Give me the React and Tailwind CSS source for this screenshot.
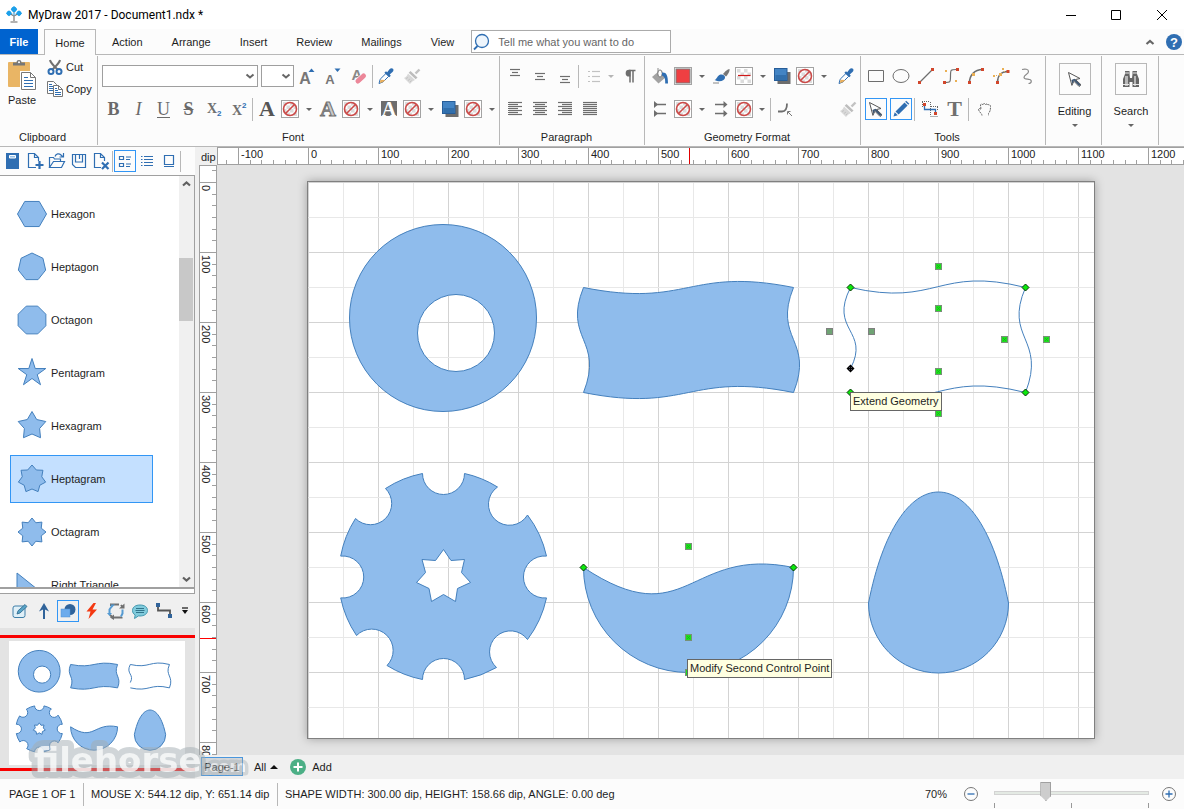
import React from "react";

const BLUE = "#2f6eb2";
const GRAY = "#6e6e6e";

function Icon({ size = 18, children, ...rest }) {
  return (
    <svg width={size} height={size} viewBox={`0 0 ${size} ${size}`} fill="none" aria-hidden="true" className="shrink-0 overflow-visible" {...rest}>
      {children}
    </svg>
  );
}

function Cell({ w = "w-[25px]", label, children, className = "" }) {
  return (
    <button type="button" aria-label={label} className={`flex h-[26px] shrink-0 items-center justify-center ${w} ${className}`}>
      {children}
    </button>
  );
}

function Sep() {
  return <span className="mr-[2px] ml-px h-[23px] w-px shrink-0 bg-[#b8b8b8]" />;
}

function Caret({ w = "w-[15px]", label = "More options", color = "#666" }) {
  return (
    <Cell w={w} label={label}>
      <svg width="6" height="3" viewBox="0 0 6 3"><path d="M0 0h6L3 3z" fill={color} /></svg>
    </Cell>
  );
}

function Checker({ children }) {
  return (
    <Icon size={18}>
      <rect x="1" y="1" width="16" height="16" fill="#fff" />
      <path d="M2 2h3.500v3.500H2zM9 2h3.500v3.500H9zM5.500 5.500H9V9H5.500zM12.500 5.500H16V9h-3.500zM2 9h3.500v3.500H2zM9 9h3.500v3.500H9zM5.500 12.500H9V16H5.500zM12.500 12.500H16V16h-3.500z" fill="#dcdcdc" />
      {children}
      <rect x=".5" y=".5" width="17" height="17" stroke="#a3a3a3" />
    </Icon>
  );
}

function Swatch({ kind = "none", label }) {
  return (
    <Cell w="w-[22px]" label={label}>
      <Checker>
        {kind === "none" && <><circle cx="9" cy="9" r="6.500" stroke="#cb4a48" strokeWidth="1.600" /><path d="M4.500 13.500l9-9" stroke="#cb4a48" strokeWidth="1.600" /></>}
        {kind === "fill" && <><rect x="2" y="2" width="14" height="14" fill="#ef3f42" stroke="#7d7d7d" /></>}
        {kind === "line" && <path d="M3 8.500h12.500" stroke="#d01818" strokeWidth="1.200" />}
      </Checker>
    </Cell>
  );
}

const Dropper = () => (
  <Icon size={18}>
    <path d="M2 16.500l1.200-4.300L9 6.400l2.800 2.800-5.700 5.700z" fill="#fff" stroke={BLUE} />
    <path d="M3.400 12.700l5 .3-2.600 2.300-3 .6z" fill="#eaaf5c" />
    <path d="M7.400 5.700l1.600-1.500 1.200 1.100 2.300-3.100c1.100-1.300 2.700-1.300 3.500-.4s.6 2.300-.5 3.300l-2.800 2.500 1.100 1.200-1.500 1.500z" fill={BLUE} />
  </Icon>
);

const FormatBrush = () => (
  <Icon size={18}>
    <path d="M16.500 2.500l-4 4" stroke="#c2c2c2" strokeWidth="2.400" />
    <path d="M7.500 4l7 6.500-1.800 1.800-7-6.600z" fill="#bdbdbd" />
    <path d="M5 6.500l7 6.500c-2 .7-3.500 2-5 4L1 11c2-1 3.300-2.500 4-4.500z" fill="#d8d8d8" />
    <path d="M3 11.500l2-1M5 13.500l2-1.500M7 15l1.500-1.500" stroke="#c4c4c4" />
  </Icon>
);

const Shadow = () => (
  <Icon size={18}>
    <rect x="4.500" y="5" width="13" height="12" fill="#6d6d6d" />
    <rect x="1.500" y="1.500" width="12.500" height="12" fill="#4384c4" stroke="#275d98" />
    <rect x="2.500" y="8" width="10.500" height="5" fill="#316fac" />
  </Icon>
);

const Pointer = () => (
  <Icon size={18}>
    <path d="M2.500 2.500l11.500 6-4.500 1 5.500 5.300-1.900 1.700-5.200-5.300-2 4.200z" fill="#fff" stroke="#555" />
    <path d="M8.500 8.800l6 6-1.300 1.200-5.300-5.500-1.500 3.500-1-4z" fill="#3b5573" />
  </Icon>
);

function Lines({ rows, color = GRAY }) {
  return (
    <Icon size={16}>
      {rows.map(([x, y, w], i) => <path key={i} d={`M${x} ${y + 0.5}h${w}`} stroke={color} strokeWidth="1.200" />)}
    </Icon>
  );
}

function Group({ label, className = "", children }) {
  return (
    <section aria-label={label} className={`flex shrink-0 flex-col border-r border-[#b8b8b8] ${className}`}>
      <div className="flex-1">{children}</div>
      <div className="pb-px text-center leading-[14px]">{label}</div>
    </section>
  );
}

const Row = ({ children, className = "" }) => <div className={`flex h-[26px] items-center ${className}`}>{children}</div>;

const SerifA = ({ mode }) => (
  <Icon size={20}>
    {mode === "invert" && <path d="M2 2h16v15H2z" fill="#6d6d6d" />}
    <text x="10" y="17" textAnchor="middle" fontFamily="Liberation Serif, serif" fontWeight="700" fontSize={mode === "invert" ? 20 : 22}
      fill={mode === "outline" ? "#c9c9c9" : mode === "invert" ? "#fff" : "#555"} stroke={mode === "outline" ? "#707070" : "none"} strokeWidth="1">A</text>
  </Icon>
);

function TitleBar() {
  return (
    <header className="flex h-[29px] items-center bg-white">
      <svg width="18" height="18" viewBox="0 0 18 18" className="ml-[5px]" aria-hidden="true">
        <path d="M9 5v10M9 10L4.500 7.500M9 10l4.500-2.500" stroke="#777" strokeWidth="1.200" fill="none" />
        <path d="M5.500 16h7" stroke="#888" strokeWidth="1.300" />
        <g fill="#1ca0ea"><path d="M9 0l3.300 3.300L9 6.600 5.700 3.300zM4 4.300l3 3-3 3-3-3zM14 4.300l3 3-3 3-3-3z" /><circle cx="9" cy="3.300" r="2.600" /><circle cx="4" cy="7.300" r="2.400" /><circle cx="14" cy="7.300" r="2.400" /></g>
        <circle cx="9" cy="8" r="1.500" fill="#86c6ea" />
      </svg>
      <h1 className="ml-[5px] flex-1 font-[Roboto,sans-serif] text-[12px] leading-[16px] text-black">MyDraw 2017 - Document1.ndx *</h1>
      <button type="button" aria-label="Minimize" className="grid h-full w-[45px] place-items-center"><Icon size={12}><path d="M1 6.500h10" stroke="#000" /></Icon></button>
      <button type="button" aria-label="Maximize" className="grid h-full w-[46px] place-items-center"><Icon size={12}><path d="M1.500 1.500h9v9h-9z" stroke="#000" /></Icon></button>
      <button type="button" aria-label="Close" className="grid h-full w-[45px] place-items-center"><Icon size={12}><path d="M1 1l10 10M11 1L1 11" stroke="#000" /></Icon></button>
    </header>
  );
}

function TabBar() {
  return (
    <nav className="flex h-[26px] border-b border-[#b8b8b8] bg-[#fcfcfc]">
      <button type="button" className="w-[38px] bg-[#0063cf] font-bold text-white">File</button>
      <button type="button" className="ml-[6px] -mb-px w-[52px] border border-b-0 border-[#b8b8b8] bg-[#fcfcfc]">Home</button>
      <div className="ml-[2px] flex gap-px">
        {["Action", "Arrange", "Insert", "Review", "Mailings", "View"].map((t) => (
          <button key={t} type="button" className="px-[14px]">{t}</button>
        ))}
      </div>
      <label className="mt-px ml-[3px] flex h-[23px] w-[200px] items-center border border-[#ababab] bg-white">
        <Icon size={20}><circle cx="10" cy="9" r="6.500" stroke={BLUE} strokeWidth="1.300" fill="#eef5fc" /><path d="M5.500 14L2 17.500" stroke={BLUE} strokeWidth="1.800" /></Icon>
        <input aria-label="Search commands" placeholder="Tell me what you want to do" className="ml-[6px] min-w-0 flex-1 bg-transparent outline-none placeholder:text-[#666]" />
      </label>
      <div className="flex-1" />
      <button type="button" aria-label="Collapse ribbon" className="px-[6px]"><Icon size={10}><path d="M1.500 7L5 4l3.500 3" stroke="#666" strokeWidth="2.200" /></Icon></button>
      <button type="button" aria-label="Help" className="pr-[2px] pl-[5px]">
        <Icon size={16}><circle cx="8" cy="8" r="8" fill={BLUE} /><text x="8" y="12.500" textAnchor="middle" fontSize="13" fontWeight="700" fill="#fff">?</text></Icon>
      </button>
    </nav>
  );
}

function Select({ label, w }) {
  return (
    <div className={`relative h-[22px] shrink-0 ${w}`}>
      <select aria-label={label} className="h-full w-full appearance-none border border-[#9f9f9f] bg-white"><option value=""></option></select>
      <svg className="pointer-events-none absolute top-[8px] right-[3px]" width="10" height="7" viewBox="0 0 10 7" fill="none"><path d="M1.500 1.500L5 4.500l3.500-3" stroke="#666" strokeWidth="2" /></svg>
    </div>
  );
}

function Ribbon() {
  const serif = "font-['Liberation_Serif',serif] text-[18px] leading-[20px] text-[#6a6a6a]";
  return (
    <div className="flex h-[92px] border-b border-[#b8b8b8] bg-[#fcfcfc] pt-px pb-px">
      <Group label="Clipboard" className="w-[98px] [&>div:last-child]:pr-[12px]">
        <div className="flex pt-[2px] pl-[7px]">
          <button type="button" className="mt-px flex flex-col items-center">
            <svg width="30" height="32" viewBox="0 0 30 32" fill="none" aria-hidden="true">
              <rect x="1" y="3" width="22" height="25" rx="1" fill="#e9b565" />
              <path d="M6 5.500V3.500h3.500C9.500 1.800 10.500 1 12 1s2.500.8 2.500 2.500H18v3H6z" fill="#777" /><circle cx="12" cy="3.300" r="1" fill="#fff" />
              <path d="M14.500 13.500h9l5 5v12h-14z" fill="#fff" stroke="#fff" strokeWidth="3" />
              <path d="M14.500 13.500h9l5 5v12h-14zM23.500 13.500v5h5" fill="#fff" stroke="#777" />
              <path d="M17 18.500h4M17 21.500h9M17 24.500h9M17 27.500h9" stroke={BLUE} />
            </svg>
            <span className="mt-[2px] leading-[14px]">Paste</span>
          </button>
          <div className="ml-[10px] flex flex-col items-start">
            <button type="button" className="flex h-[18px] items-center gap-[3px]">
              <Icon size={16}><path d="M3 1c.5 3 4 6 8 10M13 1c-.5 3-4 6-8 10" stroke="#707070" strokeWidth="2" /><circle cx="4" cy="12.500" r="2.500" stroke={BLUE} strokeWidth="2" /><circle cx="12" cy="12.500" r="2.500" stroke={BLUE} strokeWidth="2" /></Icon>Cut
            </button>
            <button type="button" className="mt-[4px] flex h-[18px] items-center gap-[3px]">
              <Icon size={16}><path d="M.5.500h6l3 3v9h-9z" fill="#fff" stroke="#777" /><path d="M2 3.500h3M2 5.500h5M2 7.500h5M2 9.500h5" stroke={BLUE} /><path d="M6.500 4.500h5l4 4v7h-9z" fill="#fff" stroke="#777" /><path d="M11.500 4.500v4h4" stroke="#777" /><path d="M8 7.500h2M8 9.500h3M8 11.500h6M8 13.500h6" stroke={BLUE} /></Icon>Copy
            </button>
          </div>
        </div>
      </Group>
      <Group label="Font" className="w-[402px] [&>div:last-child]:pr-[11px]">
        <Row className="mt-[7px] pl-[4px]">
          <Select label="Font family" w="w-[156px] mr-[3px]" />
          <Select label="Font size" w="w-[33px]" />
          <Cell w="w-[26px]" label="Grow font"><Icon size={18}><text x="7" y="17" textAnchor="middle" fontSize="16" fontWeight="700" fill="#777">A</text><path d="M10.500 5L13.500 1.500l3 3.500z" fill={BLUE} /></Icon></Cell>
          <Cell w="w-[26px]" label="Shrink font"><Icon size={18}><text x="6" y="17" textAnchor="middle" fontSize="13" fontWeight="700" fill="#777">A</text><path d="M10.500 1.500h6l-3 3.500z" fill={BLUE} /></Icon></Cell>
          <Cell w="w-[26px]" label="Clear formatting"><Icon size={18}><text x="7" y="13" textAnchor="middle" fontSize="15" fontWeight="700" fill="#888">A</text><path d="M8 14l6-5.500" stroke="#fff" strokeWidth="6" /><path d="M8 14l5.500-5" stroke="#ec8799" strokeWidth="5" strokeLinecap="round" /></Icon></Cell>
          <span className="h-[23px] w-px bg-[#b8b8b8]" />
          <Cell w="w-[26px]" label="Pick font style"><Dropper /></Cell>
          <Cell label="Format painter"><FormatBrush /></Cell>
        </Row>
        <Row className="mt-[7px] pl-[3px]">
          <Cell label="Bold"><b className={serif}>B</b></Cell>
          <Cell label="Italic"><i className={serif}>I</i></Cell>
          <Cell label="Underline"><u className={`${serif} decoration-1 underline-offset-2`}>U</u></Cell>
          <Cell label="Strikethrough"><s className={`${serif} font-bold decoration-1`}>S</s></Cell>
          <Cell label="Subscript"><Icon size={18}><text x="7" y="13" textAnchor="middle" fontFamily="Liberation Serif" fontWeight="700" fontSize="14" fill="#707070">X</text><text x="12" y="16" fontSize="8" fontWeight="700" fill={BLUE}>2</text></Icon></Cell>
          <Cell label="Superscript"><Icon size={18}><text x="7" y="15" textAnchor="middle" fontFamily="Liberation Serif" fontWeight="700" fontSize="14" fill="#707070">X</text><text x="12" y="8" fontSize="8" fontWeight="700" fill={BLUE}>2</text></Icon></Cell>
          <Sep />
          <Cell w="w-[24px]" label="Text fill"><SerifA /></Cell><Swatch label="Text fill color" /><Caret />
          <Cell w="w-[24px]" label="Text outline"><SerifA mode="outline" /></Cell><Swatch label="Text outline color" /><Caret />
          <Cell w="w-[24px]" label="Text highlight"><SerifA mode="invert" /></Cell><Swatch label="Highlight color" /><Caret />
          <Cell w="w-[24px]" label="Text shadow"><Shadow /></Cell><Swatch label="Shadow color" /><Caret />
        </Row>
      </Group>
      <Group label="Paragraph" className="w-[145px] [&>div:last-child]:pr-[11px]">
        <Row className="mt-[7px] pl-[2px]">
          <Cell label="Align top"><Lines rows={[[3, 1, 10], [5, 4, 6], [3, 7, 10]]} /></Cell>
          <Cell label="Align middle"><Lines rows={[[3, 5, 10], [5, 8, 6], [3, 11, 10]]} /></Cell>
          <Cell label="Align bottom"><Lines rows={[[3, 8, 10], [5, 11, 6], [3, 14, 10]]} /></Cell>
          <Sep />
          <Cell label="Bullets"><Lines color="#c2c2c2" rows={[[2, 3, 2], [6, 3, 8], [2, 8, 2], [6, 8, 8], [2, 13, 2], [6, 13, 8]]} /></Cell>
          <Caret w="w-[10px]" color="#b5b5b5" />
          <Cell w="w-[28px]" label="Show paragraph marks"><Icon size={16}><path d="M8 14.500V2.500h5.500M11 2.500v12" stroke={GRAY} strokeWidth="1.500" /><path d="M8.500 1.800v6.700H7a3.300 3.300 0 010-6.700z" fill={GRAY} /></Icon></Cell>
        </Row>
        <Row className="mt-[7px] pl-[2px]">
          {[
            ["Align left", [14, 10, 14, 10, 14, 10, 14], 0],
            ["Center", [14, 10, 14, 10, 14, 10, 14], 1],
            ["Align right", [14, 10, 14, 10, 14, 10, 14], 2],
            ["Justify", [14, 14, 14, 14, 14, 14, 14], 0],
          ].map(([name, ws, a]) => (
            <Cell key={name} label={name}><Lines rows={ws.map((w, i) => [1 + ((14 - w) * a) / 2, 1 + i * 2, w])} /></Cell>
          ))}
        </Row>
      </Group>
      <Group label="Geometry Format" className="w-[216px] [&>div:last-child]:pr-[11px]">
        <Row className="mt-[7px] pl-[3px]">
          <Cell w="w-[24px]" label="Fill"><Icon size={18}><path d="M8 4l7 6-7.500 6.500L1 10z" fill="#a2a2a2" /><path d="M7 1v7" stroke="#8a8a8a" /><ellipse cx="9" cy="6.500" rx="2.200" ry="3.600" fill="#fff" stroke="#777" /><path d="M11 5.500c4-.5 6 2 6 11h-2.800c.3-5-.8-7-3.200-8z" fill={BLUE} /></Icon></Cell>
          <Swatch kind="fill" label="Fill color" /><Caret />
          <Cell w="w-[24px]" label="Stroke"><Icon size={18}><path d="M17.500 2c.5 2-1.500 5.500-3.500 7.500l-3-2.500c1.500-2 4.500-4.800 6.500-5z" fill="#777" /><path d="M2.500 13c2.500-.5 2.500-4.500 6-5.500 2.500-.5 5 1 4.500 3.500-.7 3-5.500 4.500-10.500 2z" fill={BLUE} /><path d="M1 16h6" stroke="#888" /></Icon></Cell>
          <Swatch kind="line" label="Stroke color" /><Caret />
          <Cell w="w-[24px]" label="Shape shadow"><Shadow /></Cell><Swatch label="Shape shadow color" /><Caret />
          <Cell w="w-[29px]" label="Pick geometry style"><Dropper /></Cell>
        </Row>
        <Row className="mt-[7px] pl-[3px]">
          <Cell w="w-[24px]" label="Begin arrowhead"><Icon size={18}><path d="M4 4.500h11M4 13.500h11" stroke={GRAY} strokeWidth="1.400" /><path d="M3 1v7l4-3.500zM3 10v7l4-3.500z" fill={GRAY} /></Icon></Cell>
          <Swatch label="Begin arrowhead style" /><Caret />
          <Cell w="w-[24px]" label="End arrowhead"><Icon size={18}><path d="M3 4.500h10M3 13.500h10" stroke={GRAY} strokeWidth="1.400" /><path d="M11.500 1v7l4-3.500zM11.500 10v7l4-3.500z" fill={GRAY} /></Icon></Cell>
          <Swatch label="End arrowhead style" /><Caret w="w-[14px]" />
          <Sep />
          <Cell w="w-[24px]" label="Corner rounding"><Icon size={18}><path d="M2 11.500h4c4 0 5-3 5-8" stroke={GRAY} strokeWidth="1.800" /><path d="M11.500 11.500h3M11.500 11.500v3M12 12l4 4" stroke="#777" /></Icon></Cell>
          <span className="flex-1" />
          <Cell label="Geometry format painter"><FormatBrush /></Cell>
        </Row>
      </Group>
      <Group label="Tools" className="w-[185px] [&>div:last-child]:pr-[12px]">
        <Row className="mt-[7px] pl-[2px]">
          <Cell label="Rectangle"><Icon size={18}><path d="M1.500 3.500h15v11h-15z" stroke={GRAY} /></Icon></Cell>
          <Cell label="Ellipse"><Icon size={18}><ellipse cx="9" cy="9" rx="8" ry="6.500" stroke={GRAY} /></Icon></Cell>
          <Cell label="Line"><Icon size={18}><path d="M2.500 15.500l13-13" stroke={GRAY} strokeWidth="1.200" /><path d="M1 14h3v3H1zM14 1h3v3h-3z" fill="#d1462b" /></Icon></Cell>
          <Cell label="Bezier curve"><Icon size={18}><path d="M2.500 15.500c6 0 6 0 6-6.500s0-6.500 6-6.500" stroke={GRAY} strokeWidth="1.200" /><path d="M1 14h3v3H1zM14 1h3v3h-3z" fill="#d1462b" /><path d="M3 3h2v2H3zM13 13h2v2h-2z" fill="#eab055" /></Icon></Cell>
          <Cell label="Arc"><Icon size={18}><path d="M2.500 15.500c0-7 5-13 13-13" stroke={GRAY} strokeWidth="1.500" /><path d="M1 14h3v3H1zM14 1h3v3h-3z" fill="#d1462b" /><path d="M5 6h3v3H5z" fill="#eab055" /></Icon></Cell>
          <Cell label="Spline"><Icon size={18}><path d="M5.500 15.500c0-7 4-11 10-11" stroke={GRAY} strokeWidth="1.500" /><path d="M4 14h3v3H4zM14.500 3h3v3h-3z" fill="#d1462b" /><path d="M1 8h2v2H1zM10 1h2v2h-2zM7 6h3v3H7zM4 8h1v1H4zM12 4h1v1h-1z" fill="#eab055" /></Icon></Cell>
          <Cell w="w-[28px]" label="Freehand"><Icon size={18}><path d="M4 2.500c3-.8 6.500-.5 6.500 2 0 3-4.500 3-4.500 6 0 1.800 3 1.500 5.500 2s2.500 4-1 4" stroke="#8a8a8a" strokeWidth="1.200" /></Icon></Cell>
        </Row>
        <Row className="mt-[7px] pl-[4px]">
          <Cell w="w-[22px]" label="Pointer" className="!h-[22px] border border-[#3296f5]"><Pointer /></Cell>
          <Cell w="w-[22px] ml-[3px]" label="Pencil" className="!h-[22px] border border-[#3296f5]"><Icon size={18}><path d="M1.500 16.500l1.200-4.300 3.100 3.100zM3.500 11.400L12.500 2.400l3.100 3.100-9 9z" fill={BLUE} /><path d="M13.200 1.700l1-1 3.100 3.100-1 1z" fill={BLUE} /></Icon></Cell>
          <span className="w-px" /><Sep />
          <Cell label="Connector"><Icon size={18}><path d="M1 1.500h8M1.500 2v5M9.500 2v14M9.500 16.500h7M16.500 7v4M10 6.500h7" stroke="#666" strokeDasharray="1 1" /><path d="M3.500 5v4.500h11V14" stroke={BLUE} strokeWidth="1.300" /><path d="M2 3h3v3H2zM13 12h3v3h-3z" fill="#d1462b" /></Icon></Cell>
          <Cell label="Text"><b className="font-['Liberation_Serif',serif] text-[22px] leading-[22px] text-[#707070]">T</b></Cell>
          <Sep />
          <Cell w="w-[28px]" label="Pan"><Icon size={18}><path d="M6 15.500c0-2-3-3.500-3.500-6 0-1.500 2-1 2.500 0L4.500 5C5 3.500 6.500 4 7 5c0-2 2-2 2.500 0 .5-1.500 2-1.500 2.500 0 1-1 2.500 0 2.500 1.500 0 4-.5 5-2 7v2" stroke="#666" strokeDasharray="2 .7" /></Icon></Cell>
        </Row>
      </Group>
      {[
        ["Editing", "w-[56px]", <Pointer key="p" />],
        ["Search", "w-[57px]", <Icon size={20} key="s"><path d="M4 2h4.500v3L9 9h2l.5-4V2H16v3l2 5v8h-6.500v-5h-3v5H2v-8l2-5z" fill="#666" /><path d="M4 7h3v10H4zM13 7h2v10h-2z" fill="#b8b8b8" /><path d="M4 4h4M12 4h4M2 15.500h6M12 15.500h6" stroke="#e8e8e8" /></Icon>],
      ].map(([t, w, icon]) => (
        <button key={t} type="button" className={`flex shrink-0 flex-col items-center border-r border-[#b8b8b8] pt-[7px] pl-[2px] ${w}`}>
          <span className="grid h-[32px] w-[32px] place-items-center border border-[#b8b8b8]">{icon}</span>
          <span className="mt-[9px] leading-[14px]">{t}</span>
          <svg className="mt-[6px]" width="6" height="3" viewBox="0 0 6 3"><path d="M0 0h6L3 3z" fill="#666" /></svg>
        </button>
      ))}
    </div>
  );
}

function star(n, outer, inner, rot = -90) {
  const pts = [];
  const count = inner ? n * 2 : n;
  for (let i = 0; i < count; i++) {
    const r = inner && i % 2 ? inner : outer;
    const a = ((rot + (360 / count) * i) * Math.PI) / 180;
    pts.push(`${(15 + r * Math.cos(a)).toFixed(2)},${(15 + r * Math.sin(a)).toFixed(2)}`);
  }
  return pts.join(" ");
}

const LIBRARY = [
  ["Hexagon", star(6, 14.5, 0, 0)],
  ["Heptagon", star(7, 14, 0)],
  ["Octagon", star(8, 15, 0, 22.5)],
  ["Pentagram", star(5, 14.5, 5.5)],
  ["Hexagram", star(5, 14.5, 8)],
  ["Heptagram", star(7, 14, 10)],
  ["Octagram", star(8, 14, 10)],
  ["Right Triangle", "0,3 0,27 30,27"],
];

function LibraryPanel() {
  const b = { stroke: BLUE, strokeWidth: 1.2 };
  return (
    <>
      <div className="flex h-[29px] items-center border-b border-[#a0a0a0] bg-[#fcfcfc]">
        <Cell w="w-[24px]" label="Library"><Icon size={18}><rect x="3" y="1" width="13" height="16" fill={BLUE} /><path d="M6.500 3.500h6v2.500h-6z" fill="#9cc3e8" stroke="#fff" /></Icon></Cell>
        <Cell w="w-[22px]" label="New library"><Icon size={18}><path d="M10 15.500H2.500v-14h6l4 4V9M8.500 1.500v4h4" {...b} /><path d="M13.500 9v8M9.500 13h8" stroke={BLUE} strokeWidth="2.200" /></Icon></Cell>
        <Cell w="w-[22px]" label="Open library"><Icon size={18}><path d="M1.500 15.500V5.500h4l1 1.500h6v2.500M1.500 15.500l4-6h11l-3 6zM7 4.500c1-3 4-3.500 6-1.500l2 2M15.500 1v4h-4" {...b} /></Icon></Cell>
        <Cell w="w-[22px]" label="Save library"><Icon size={18}><path d="M2.500 2.500h13v13H5.500l-3-3zM5.500 2.500v7.500h7V2.500M9.500 3v4" {...b} /></Icon></Cell>
        <Cell w="w-[22px]" label="Close library"><Icon size={18}><path d="M9 15.500H2.500v-14h6l4 4V9M8.500 1.500v4h4" {...b} /><path d="M10 10.500l6.500 6.500M16.500 10.500L10 17" stroke={BLUE} strokeWidth="2.200" /></Icon></Cell>
        <span className="h-[21px] w-px bg-[#b8b8b8]" />
        <Cell w="w-[22px] ml-px" label="Icons and names" className="!h-[22px] border border-[#3296f5]"><Icon size={16}><path d="M2.500 3.500h4v3h-4zM2.500 10.500h4v3h-4zM9 4h5M9 6.500h4M9 11h5M9 13.500h4" {...b} /></Icon></Cell>
        <Cell w="w-[22px]" label="Names only"><Icon size={16}><path d="M5 3.500h9M5 6.500h9M5 9.500h9M5 12.500h9M2 3.500h1.500M2 6.500h1.500M2 9.500h1.500M2 12.500h1.500" {...b} /></Icon></Cell>
        <Cell w="w-[22px]" label="Icons only"><Icon size={16}><path d="M3.500 2.500h9v9h-9zM3 13.500h10" {...b} /></Icon></Cell>
        <span className="h-[21px] w-px bg-[#b8b8b8]" />
      </div>
      <div className="flex min-h-0 flex-1 border-r border-[#a0a0a0] bg-white">
        <ul className="min-w-0 flex-1 overflow-hidden pt-[14px] pl-[10px]">
          {LIBRARY.map(([name, pts]) => (
            <li key={name} className="mb-[5px]">
              <button type="button" className={`flex h-[48px] w-[143px] items-center gap-[4px] border pl-[6px] ${name === "Heptagram" ? "border-[#3296f5] bg-[#c4e0ff]" : "border-transparent"}`}>
                <Icon size={30}><polygon points={pts} fill="#8fbcec" stroke="#4480bd" /></Icon>
                <span>{name}</span>
              </button>
            </li>
          ))}
        </ul>
        <div className="flex w-[15px] flex-col items-center bg-[#f0f0f0]">
          <Icon size={16}><path d="M4 9.500L7.500 6.500l3.500 3" stroke="#606060" strokeWidth="2.200" /></Icon>
          <div className="mt-[66px] mr-px h-[63px] w-[14px] bg-[#c8c8c8]" />
          <div className="flex-1" />
          <Icon size={16}><path d="M4 6.500L7.500 9.500l3.500-3" stroke="#606060" strokeWidth="2.200" /></Icon>
        </div>
      </div>
      <div className="h-[7px] border-y border-t-2 border-r border-[#a0a0a0] bg-white" />
    </>
  );
}

function CategoryBar() {
  return (
    <div className="flex h-[34px] items-center bg-[#f0f0f0] pl-[7px]">
      <Cell label="Edit"><Icon size={16}><rect x="1" y="3" width="12" height="11.500" rx="2" fill="#e0f0f8" stroke="#3f7fa8" /><path d="M5 11l1-3.200 7-6.300 2 2-7 6.500z" fill="#59a5c8" stroke="#2b648a" strokeWidth=".8" /></Icon></Cell>
      <Cell w="w-[24px]" label="Arrow shapes"><Icon size={16}><path d="M8 16V5" stroke="#30639a" strokeWidth="2" /><path d="M8 0l5 8.500L8 6 3 8.500z" fill="#30639a" /></Icon></Cell>
      <Cell w="w-[22px] ml-px" label="Basic shapes" className="!h-[22px] border border-[#3296f5]"><Icon size={18}><circle cx="11" cy="7.500" r="5.500" fill="#30639a" /><rect x="2" y="7" width="9" height="8" fill="#6cabec" stroke="#4e90d4" strokeWidth=".5" /></Icon></Cell>
      <Cell label="Energy"><Icon size={18}><path d="M10.500 1L3.500 9.500h4L5.500 17l8.500-9.500H9.500L13 1z" fill="#f43912" /></Icon></Cell>
      <Cell w="w-[24px]" label="Cycle"><Icon size={18}><path d="M4 4V2.500h8M14 3l2 2.500M14.500 15v.5H6L3 13" stroke="#707070" strokeWidth="2" /><path d="M2.500 11V7.500L5 4M15.500 7.500v4L14 14.500" stroke="#569bd2" strokeWidth="2" /><path d="M12 6.500h5.500V1.500zM7 12.500v5.500l-4-2.500z" fill="#707070" /><path d="M0 11h5l-2.500 3zM3.500 2.500h4.500l-3 3z" fill="#569bd2" /></Icon></Cell>
      <Cell w="w-[24px]" label="Callouts"><Icon size={18}><path d="M9 3c4.500 0 7.500 2 7.500 5.500S13 14 9 14l-1.500-.1-4 2.600.7-3.500C2.500 12 1.500 10.500 1.500 8.500 1.500 5 4.500 3 9 3z" fill="#80cbdc" stroke="#4599b0" /><path d="M5 6.500h8M4.500 8.500h9M5 10.500h8" stroke="#31758c" /></Icon></Cell>
      <Cell w="w-[24px]" label="Connectors"><Icon size={18}><path d="M3 3v5.500h12V14" stroke="#555" strokeWidth="1.800" /><path d="M1 1h4v4H1zM13 12h4v4h-4z" fill="#30639a" /></Icon></Cell>
      <Cell w="w-[17px]" label="More categories"><Icon size={8}><path d="M1 1h6" stroke="#111" strokeWidth="1.200" /><path d="M1 3h6L4 7z" fill="#111" /></Icon></Cell>
    </div>
  );
}

function Drawing() {
  return (
    <g fill="#8fbcec" stroke="#4480bd" strokeWidth="1" className="[&_*]:[vector-effect:non-scaling-stroke]">
      <path fillRule="evenodd" d="M349.500 318a93.500 93.500 0 11187 0 93.500 93.500 0 11-187 0zM417.500 333a38.500 38.500 0 1077 0 38.500 38.500 0 10-77 0z" />
      <path transform="translate(-.5 -.5)" d="M584 288C689 309 689 267 794 288C773 340 815 340 794 393C689 372 689 414 584 393C605 340 563 340 584 288z" />
      <path transform="translate(-.5 -.5)" fill="none" d="M851 369C871 331 829 331 851 288C938 308 938 266 1026 288C1004 339 1047 339 1026 393C938 371 938 413 851 393" />
      <path fillRule="evenodd" d="M422.500 473.500A21 21 0 00464.500 473.500A105 105 0 01497.500 487A21 21 0 10527.500 515A105 105 0 01546.500 556.100A21 21 0 10546.500 597.900A105 105 0 01527.500 639.500A21 21 0 10496.500 667.500A105 105 0 01464.500 679.500A21 21 0 00422.500 679.500A105 105 0 01387 665.500A21 21 0 10356.500 635.500A105 105 0 01340.700 597.900A21 21 0 10340.700 556.100A105 105 0 01355.500 518.500A21 21 0 10385.500 488.500A105 105 0 01422.500 473.500zM443.500 549.500L451 560.500 464.500 559.500 461.500 572.500 470.500 582.500 457.500 588.500 455.500 601.500 443.500 594.500 431.500 601.500 429 588.500 416.500 582.500 425.500 572.500 422 559.500 435.500 560.500z" />
      <path transform="translate(-.5 -.5)" d="M584 568C688 637 688 546 794 568A105 105 0 01584 568z" />
      <path d="M868.500 603C883 530 910 492 938.500 492C967 492 994 530 1008.500 603A70 70 0 01868.500 603z" />
    </g>
  );
}

function Navigator() {
  return (
    <div className="h-[151px] overflow-hidden bg-[#e3e3e3]">
      <div className="mt-[7px] flex h-[136px] justify-start border-y-[3px] border-[#f90000] py-[3px] pl-[9px]">
        <svg width="176" height="124" viewBox="308 182 787 557" preserveAspectRatio="none" className="bg-white" role="img" aria-label="Document overview"><Drawing /></svg>
      </div>
    </div>
  );
}

const range = (a, b) => Array.from({ length: b - a + 1 }, (_, i) => a + i);

function TopRuler() {
  return (
    <svg className="h-[18px] min-w-0 flex-1 border-t border-b border-l border-[#a0a0a0] bg-white" aria-label="Horizontal ruler">
      <g transform="translate(-218 -148)" fontSize="11" fill="#222">
        {range(-7, 82).map((i) => {
          const x = Math.round(308 + (i * 70) / 6) + 0.5;
          return <path key={i} d={`M${x} ${i % 6 ? 160 : 148}V164`} stroke="#a0a0a0" />;
        })}
        {range(-1, 12).map((i) => <text key={i} x={308 + i * 70 + 3} y="158">{i * 100}</text>)}
        <path d="M689.500 148V164" stroke="#e00000" />
      </g>
    </svg>
  );
}

function SideRuler() {
  return (
    <svg className="h-full w-[18px] shrink-0 border-x border-t border-[#a0a0a0] bg-white" aria-label="Vertical ruler">
      <g transform="translate(-200 -166)" fontSize="11" fill="#222">
        {range(-1, 52).map((i) => {
          const y = Math.round(182 + (i * 70) / 6) + 0.5;
          return <path key={i} d={`M${i % 6 ? 212 : 200} ${y}H217`} stroke="#a0a0a0" />;
        })}
        {range(0, 8).map((i) => <text key={i} transform={`translate(202 ${185 + i * 70}) rotate(90)`}>{i * 100}</text>)}
        <path d="M200 638.500H217" stroke="#f00" />
      </g>
    </svg>
  );
}

const SQUARES = [[938, 266], [938, 308], [938, 371], [938, 413], [1004, 339], [1046, 339], [688, 546], [688, 637], [688, 672]];
const DIMMED = [[829, 331], [871, 331]];
const DIAMONDS = [[851, 288], [1026, 288], [1026, 393], [851, 393], [584, 568], [794, 568]];

function Canvas() {
  return (
    <div className="relative min-w-0 flex-1 overflow-hidden bg-[#e3e3e3]">
      <svg className="block h-full w-full" role="img" aria-label="Drawing page">
        <g transform="translate(-217 -165)">
          <rect x="307.500" y="181.500" width="787" height="557" fill="#fff" stroke="#808080" className="drop-shadow-[0_0_5px_rgba(0,0,0,0.3)]" />
          {range(0, 22).map((i) => <path key={`v${i}`} d={`M${308.5 + i * 35} 182V738`} stroke={i % 2 ? "#e8e8e8" : "#d3d3d3"} />)}
          {range(0, 15).map((i) => <path key={`h${i}`} d={`M308 ${182.5 + i * 35}H1094`} stroke={i % 2 ? "#e8e8e8" : "#d3d3d3"} />)}
          <Drawing />
          {SQUARES.map(([x, y]) => <g key={`${x}-${y}`}><rect x={x - 2.5} y={y - 2.5} width="6" height="6" fill="#1fe01f" stroke="#779077" /><path d={`M${x - 1} ${y - 1}l3 3m0-3l-3 3`} stroke="#12b012" strokeWidth=".7" /></g>)}
          {DIMMED.map(([x, y]) => <rect key={x} x={x - 2.5} y={y - 2.5} width="6" height="6" fill="#6fa374" stroke="#7f7f7f" />)}
          {DIAMONDS.map(([x, y]) => <path key={`${x}-${y}`} d={`M${x - 0.5} ${y - 4}l3.500 3.500-3.500 3.500-3.500-3.500z`} fill="#0ce80c" stroke="#063306" />)}
          <path d="M850.500 364.500l4 4-4 4-4-4z" fill="#000" /><path d="M848.500 366.500l4 4m0-4l-4 4" stroke="#667" strokeWidth=".8" /><path d="M847 368.500h7M850.500 365v7" stroke="#000" />
        </g>
      </svg>
      <div role="tooltip" className="absolute top-[227px] left-[633px] border border-[#666] bg-[#ffffe1] px-[2px] pb-px leading-[16px] whitespace-nowrap">Extend Geometry</div>
      <div role="tooltip" className="absolute top-[494px] left-[470px] border border-[#666] bg-[#ffffe1] px-[2px] pb-px leading-[16px] whitespace-nowrap">Modify Second Control Point</div>
    </div>
  );
}

function PageTabs() {
  return (
    <div className="flex h-[24px] items-center bg-[#f0f0f0] pb-px pl-[2px]">
      <button type="button" className="h-[19px] w-[42px] border border-[#4a96dc] bg-[#d3d6d9]">Page-1</button>
      <button type="button" className="ml-[11px] flex items-center gap-[4px]">All<svg width="8" height="4" viewBox="0 0 8 4"><path d="M0 4h8L4 0z" fill="#111" /></svg></button>
      <button type="button" className="ml-[12px] flex items-center gap-[6px]">
        <Icon size={16}><circle cx="8" cy="8" r="8" fill="#4caf86" /><path d="M8 3.500v9M3.500 8h9" stroke="#fff" strokeWidth="2" /></Icon>Add
      </button>
    </div>
  );
}

function StatusBar() {
  return (
    <footer className="flex h-[30px] items-center bg-[#fcfcfc] pl-[9px]">
      <span className="w-[74px] whitespace-nowrap">PAGE 1 OF 1</span>
      <span className="h-[23px] w-px bg-[#b8b8b8]" />
      <span className="w-[193px] pl-[7px] whitespace-nowrap">MOUSE X: 544.12 dip, Y: 651.14 dip</span>
      <span className="h-[23px] w-px bg-[#b8b8b8]" />
      <span className="pl-[7px] whitespace-nowrap">SHAPE WIDTH: 300.00 dip, HEIGHT: 158.66 dip, ANGLE: 0.00 deg</span>
      <span className="flex-1" />
      <span>70%</span>
      <button type="button" aria-label="Zoom out" className="ml-[17px]"><Icon size={14}><circle cx="7" cy="7" r="6.500" stroke="#777" /><path d="M3.500 7h7" stroke={BLUE} strokeWidth="1.300" /></Icon></button>
      <div className="ml-[16px] w-[155px] pt-[3px]">
        <input type="range" aria-label="Zoom" min="0" max="100" defaultValue="32" className="block h-[20px] w-full appearance-none bg-transparent [&::-webkit-slider-runnable-track]:h-[4px] [&::-webkit-slider-runnable-track]:border [&::-webkit-slider-runnable-track]:border-[#d3d3d3] [&::-webkit-slider-runnable-track]:bg-[#e4eae4] [&::-webkit-slider-thumb]:mt-[-10px] [&::-webkit-slider-thumb]:h-[19px] [&::-webkit-slider-thumb]:w-[11px] [&::-webkit-slider-thumb]:appearance-none [&::-webkit-slider-thumb]:border [&::-webkit-slider-thumb]:border-[#a0a0a0] [&::-webkit-slider-thumb]:bg-[#cdcdcd] [&::-webkit-slider-thumb]:[clip-path:polygon(0_0,100%_0,100%_72%,50%_100%,0_72%)]" />
        <div className="flex h-[5px] justify-between"><i className="w-px bg-[#999]" /><i className="w-px bg-[#999]" /><i className="w-px bg-[#999]" /></div>
      </div>
      <button type="button" aria-label="Zoom in" className="mr-[8px] ml-[13px]"><Icon size={14}><circle cx="7" cy="7" r="6.500" stroke="#777" /><path d="M3.500 7h7M7 3.500v7" stroke={BLUE} strokeWidth="1.300" /></Icon></button>
    </footer>
  );
}

function Watermark() {
  return (
    <svg className="pointer-events-none absolute bottom-0 left-[26px]" width="226" height="46" viewBox="0 0 226 46" fontFamily="DejaVu Sans, sans-serif" fontWeight="700" aria-hidden="true">
      <g opacity=".5" fill="#a3adb2" stroke="#a3adb2" strokeWidth="12" strokeLinejoin="round">
        <text x="8" y="39" fontSize="34">filehorse</text>
      </g>
      <text x="8" y="39" fontSize="34" fill="#fbfcfc" opacity=".8">filehorse</text>
      <text x="177" y="39" fontSize="16" fill="#fff" stroke="#a3adb2" strokeWidth="7" paintOrder="stroke" strokeLinejoin="round" opacity=".4">.com</text>
    </svg>
  );
}

export default function App() {
  return (
    <div className="flex h-screen flex-col overflow-hidden bg-[#f0f0f0] font-['Liberation_Sans',Arial,sans-serif] text-[11px] leading-[14px] text-[#1e1e1e]">
      <TitleBar />
      <TabBar />
      <Ribbon />
      <div className="relative flex min-h-0 flex-1">
        <aside className="flex w-[195px] shrink-0 flex-col">
          <LibraryPanel />
          <CategoryBar />
          <Navigator />
        </aside>
        <main className="ml-[4px] flex min-w-0 flex-1 flex-col">
          <div className="flex h-[18px]">
            <span className="w-[18px] shrink-0 pt-[3px] pl-[2px]">dip</span>
            <TopRuler />
          </div>
          <div className="flex min-h-0 flex-1">
            <SideRuler />
            <Canvas />
          </div>
          <PageTabs />
        </main>
        <Watermark />
      </div>
      <StatusBar />
    </div>
  );
}
